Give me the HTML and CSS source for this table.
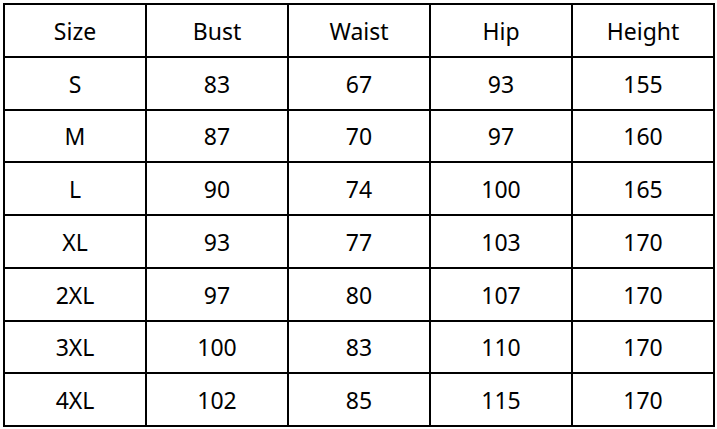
FILE: index.html
```html
<!DOCTYPE html>
<html>
<head>
<meta charset="utf-8">
<link rel="stylesheet" href="styles.css">
</head>
<body>
<div class="chart">
  <div class="cell">Size</div><div class="cell">Bust</div><div class="cell">Waist</div><div class="cell">Hip</div><div class="cell">Height</div>
  <div class="cell">S</div><div class="cell">83</div><div class="cell">67</div><div class="cell">93</div><div class="cell">155</div>
  <div class="cell">M</div><div class="cell">87</div><div class="cell">70</div><div class="cell">97</div><div class="cell">160</div>
  <div class="cell">L</div><div class="cell">90</div><div class="cell">74</div><div class="cell">100</div><div class="cell">165</div>
  <div class="cell">XL</div><div class="cell">93</div><div class="cell">77</div><div class="cell">103</div><div class="cell">170</div>
  <div class="cell">2XL</div><div class="cell">97</div><div class="cell">80</div><div class="cell">107</div><div class="cell">170</div>
  <div class="cell">3XL</div><div class="cell">100</div><div class="cell">83</div><div class="cell">110</div><div class="cell">170</div>
  <div class="cell">4XL</div><div class="cell">102</div><div class="cell">85</div><div class="cell">115</div><div class="cell">170</div>
</div>
</body>
</html>
```
FILE: styles.css
```css
html, body {
  margin: 0;
  padding: 0;
  background: #ffffff;
}
body {
  padding: 3px 0 0 3px;
  font-family: "Noto Sans", "Open Sans", sans-serif;
}
.chart {
  width: 712px;
  height: 424px;
  box-sizing: border-box;
  display: grid;
  grid-template-columns: repeat(5, 1fr);
  grid-template-rows: repeat(8, 1fr);
  gap: 2px;
  padding: 2px;
  background: #000000;
}
.cell {
  background: #ffffff;
  display: flex;
  align-items: center;
  justify-content: center;
  font-size: 23px;
  padding-top: 1px;
  color: #000000;
}
```
